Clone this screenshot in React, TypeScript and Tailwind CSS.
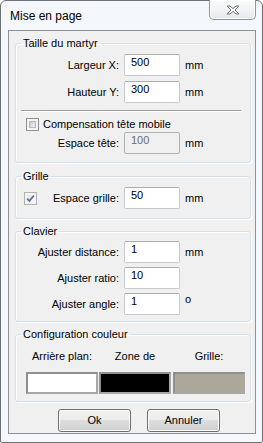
import type { ReactNode } from "react";

const inputCls =
  "w-[56px] h-[22px] shrink-0 rounded-[2px] border border-[#c5cad1] border-t-[#abadb3] bg-white pl-[6px] pt-[1px] leading-[13px] text-black";

function Checkbox({ checked = false }: { checked?: boolean }) {
  return (
    <div
      className={
        "relative w-[13px] h-[13px] shrink-0 border bg-[#f4f4f4] p-[2px] " +
        (checked ? "border-[#b1b1b1]" : "border-[#8e8f8f]")
      }
    >
      <div
        className={
          "w-full h-full " +
          (checked
            ? "bg-[linear-gradient(135deg,#e4e4e4,#fbfbfb)]"
            : "bg-[linear-gradient(135deg,#c9c9c9,#f6f6f6)] border border-[#b7b7b7]")
        }
      />
      {checked && (
        <svg className="absolute left-0 top-0" width="11" height="11" viewBox="0 0 11 11">
          <path d="M2.2 5.6 L4.4 8 L8.8 2.6" fill="none" stroke="#5a6c98" strokeWidth="1.7" />
        </svg>
      )}
    </div>
  );
}

function Group({
  title,
  className = "",
  children,
}: {
  title: string;
  className?: string;
  children: ReactNode;
}) {
  return (
    <fieldset
      className={
        "m-0 min-w-0 rounded-[3px] border border-[#d5dfe5] p-0 shadow-[inset_1px_1px_0_#ffffff,1px_1px_0_#ffffff] " +
        className
      }
    >
      <legend className="ml-[5px] px-[2px] leading-[13px]">{title}</legend>
      {children}
    </fieldset>
  );
}

function Row({
  label,
  value,
  unit,
  top = "mt-0",
  disabled = false,
}: {
  label: string;
  value: string;
  unit?: string;
  top?: string;
  disabled?: boolean;
}) {
  return (
    <div className={"flex items-start h-[22px] " + top}>
      <span className="w-[108px] shrink-0 pt-[5px] pr-[5px] text-right leading-[13px]">{label}</span>
      <div
        className={
          disabled
            ? "w-[56px] h-[22px] shrink-0 rounded-[2px] border border-[#adb2b5] bg-[#f0f0f0] pl-[6px] pt-[1px] leading-[13px] text-[#6d6d6d]"
            : inputCls
        }
      >
        {value}
      </div>
      {unit === "o" ? (
        <span className="ml-[5px] leading-[13px]">o</span>
      ) : unit ? (
        <span className="ml-[5px] pt-[5px] leading-[13px]">{unit}</span>
      ) : null}
    </div>
  );
}

function Button({ children }: { children: ReactNode }) {
  return (
    <div className="flex h-[23px] w-[73px] items-center justify-center rounded-[3px] border border-[#707070] bg-[linear-gradient(#f2f2f2_0%,#ebebeb_50%,#dddddd_50%,#cfcfcf_100%)] leading-[13px] shadow-[inset_0_0_0_1px_#fcfcfc]">
      {children}
    </div>
  );
}

export default function App() {
  return (
    <div className="w-[263px] h-[443px] font-['Liberation_Sans',Arial,sans-serif] text-[11px] text-black">
      <div className="flex h-full w-full flex-col rounded-t-[6px] rounded-b-[2px] border border-[#6e7075] bg-[#f4f7fb]">
        {/* title bar */}
        <div className="flex h-[29px] shrink-0 items-start justify-between">
          <span className="pl-[9px] pt-[8px] text-[12px] leading-[15px]">Mise en page</span>
          <div className="-mt-[1px] mr-[6px] flex h-[20px] w-[47px] items-center justify-center rounded-b-[5px] border border-t-0 border-[#8d939b] bg-[linear-gradient(#fbfbfb,#e6e9ed)] shadow-[inset_0_0_0_1px_#ffffff]">
            <svg width="14" height="10" viewBox="0 0 14 10">
              <path
                d="M1 1 H4 L7 3.6 L10 1 H13 L9 5 L13 9 H10 L7 6.4 L4 9 H1 L5 5 Z"
                fill="#ffffff"
                stroke="#6c6f74"
                strokeWidth="1"
                strokeLinejoin="round"
              />
            </svg>
          </div>
        </div>

        {/* client area */}
        <div className="ml-[7px] mr-[6px] flex h-[404px] flex-col border border-[#8e9196] bg-[#f0f0f0] pl-[6px] pr-[4px] pt-[6px]">
          <Group title="Taille du martyr" className="pb-[8px]">
            <Row label="Largeur X:" value="500" unit="mm" top="mt-[4px]" />
            <Row label="Hauteur Y:" value="300" unit="mm" top="mt-[5px]" />
            <div className="ml-[5px] mr-[9px] mt-[7px] h-[2px] border-t border-[#a0a0a0] bg-white" />
            <div className="mt-[6px] flex h-[13px] items-center pl-[10px]">
              <Checkbox />
              <span className="ml-[4px] leading-[13px]">Compensation tête mobile</span>
            </div>
            <Row label="Espace tête:" value="100" unit="mm" top="mt-[1px]" disabled />
          </Group>

          <Group title="Grille" className="mt-[7px] pb-[9px]">
            <div className="mt-[4px] flex h-[22px] items-start">
              <div className="flex w-[108px] shrink-0 items-center pr-[5px] h-[22px]">
                <div className="ml-[8px]">
                  <Checkbox checked />
                </div>
                <span className="ml-auto leading-[13px] pt-[1px]">Espace grille:</span>
              </div>
              <div className={inputCls}>50</div>
              <span className="ml-[5px] pt-[5px] leading-[13px]">mm</span>
            </div>
          </Group>

          <Group title="Clavier" className="mt-[6px] pb-[6px]">
            <Row label="Ajuster distance:" value="1" unit="mm" top="mt-[3px]" />
            <Row label="Ajuster ratio:" value="10" top="mt-[4px]" />
            <Row label="Ajuster angle:" value="1" unit="o" top="mt-[4px]" />
          </Group>

          <Group title="Configuration couleur" className="mt-[6px] pb-[7px]">
            <div className="mt-[9px] flex h-[13px] pl-[10px] leading-[13px]">
              <span className="w-[72px] text-center">Arrière plan:</span>
              <span className="ml-[1px] w-[72px] text-center">Zone de</span>
              <span className="ml-[2px] w-[72px] text-center">Grille:</span>
            </div>
            <div className="mt-[9px] flex h-[22px] pl-[10px]">
              <div className="h-[22px] w-[72px] border-2 border-[#a7a7a7] border-t-[#8f8f8f] border-l-[#8f8f8f] bg-white" />
              <div className="ml-[1px] h-[22px] w-[72px] border-2 border-[#a7a7a7] border-t-[#8f8f8f] border-l-[#8f8f8f] bg-black" />
              <div className="ml-[2px] h-[22px] w-[72px] border-2 border-[#a7a7a7] border-t-[#8f8f8f] border-l-[#8f8f8f] bg-[#aca899]" />
            </div>
          </Group>

          <div className="mt-[7px] flex pl-[43px]">
            <Button>Ok</Button>
            <div className="ml-[16px]">
              <Button>Annuler</Button>
            </div>
          </div>
        </div>
      </div>
    </div>
  );
}
